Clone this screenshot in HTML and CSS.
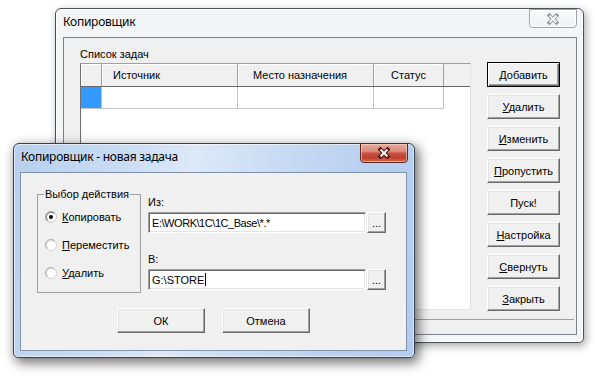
FILE: index.html
```html
<!DOCTYPE html>
<html lang="ru">
<head>
<meta charset="utf-8">
<title>Копировщик</title>
<link rel="stylesheet" href="styles.css">
</head>
<body>
<div class="desktop">
  <div class="win win-main">
    <div class="titlebar">
      <div class="title">Копировщик</div>
      <div class="close close-inactive">
        <svg width="14" height="12" viewBox="0 0 14 12">
          <path d="M3.5 2.5 L10.5 9.5 M10.5 2.5 L3.5 9.5" stroke="#8c9096" stroke-width="3.8" stroke-linecap="square" fill="none"/>
          <path d="M3.5 2.5 L10.5 9.5 M10.5 2.5 L3.5 9.5" stroke="#f7f7f7" stroke-width="1.9" stroke-linecap="butt" fill="none"/>
        </svg>
      </div>
    </div>
    <div class="client client-main">
      <div class="main-body">
        <div class="tasks">
          <div class="tasks-label">Список задач</div>
          <div class="grid">
            <div class="grid-head">
              <div class="hcell c0"></div>
              <div class="hcell c1 h-src">Источник</div>
              <div class="hcell c2 h-dst">Место назначения</div>
              <div class="hcell c3 h-status">Статус</div>
            </div>
            <div class="grid-row">
              <div class="cell c0 sel"></div>
              <div class="cell c1"></div>
              <div class="cell c2"></div>
              <div class="cell c3"></div>
            </div>
          </div>
        </div>
        <div class="side-buttons">
          <div class="btn btn-side btn-default"><span><u>Д</u>обавить</span></div>
          <div class="btn btn-side"><span><u>У</u>далить</span></div>
          <div class="btn btn-side"><span><u>И</u>зменить</span></div>
          <div class="btn btn-side"><span><u>П</u>ропустить</span></div>
          <div class="btn btn-side"><span>Пуск!</span></div>
          <div class="btn btn-side"><span><u>Н</u>астройка</span></div>
          <div class="btn btn-side"><span><u>С</u>вернуть</span></div>
          <div class="btn btn-side"><span><u>З</u>акрыть</span></div>
        </div>
      </div>
      <div class="statusbar"></div>
    </div>
  </div>

  <div class="win win-dialog">
    <div class="titlebar">
      <div class="title">Копировщик - новая задача</div>
      <div class="close close-active">
        <svg width="14" height="12" viewBox="0 0 14 12">
          <path d="M3.5 2.5 L10.5 9.5 M10.5 2.5 L3.5 9.5" stroke="#4a0f08" stroke-width="4" stroke-linecap="square" fill="none"/>
          <path d="M3.5 2.5 L10.5 9.5 M10.5 2.5 L3.5 9.5" stroke="#ffffff" stroke-width="2" stroke-linecap="butt" fill="none"/>
        </svg>
      </div>
    </div>
    <div class="client client-dialog">
      <div class="dlg-top">
        <fieldset class="group">
          <legend>Выбор действия</legend>
          <div class="radio">
            <svg class="radio-mark" width="12" height="12" viewBox="0 0 12 12">
              <circle cx="6" cy="6" r="5.5" fill="#fff" stroke="#c8c8c8"/>
              <path d="M2.1 9.9 A5.5 5.5 0 0 1 9.9 2.1" stroke="#a0a0a0" fill="none"/>
              <path d="M2.8 9.2 A4.5 4.5 0 0 1 9.2 2.8" stroke="#808080" fill="none"/>
              <circle cx="6" cy="6" r="2" fill="#000"/>
            </svg>
            <span><u>К</u>опировать</span>
          </div>
          <div class="radio">
            <svg class="radio-mark" width="12" height="12" viewBox="0 0 12 12">
              <circle cx="6" cy="6" r="5.5" fill="#fff" stroke="#d4d4d4"/>
              <path d="M2.1 9.9 A5.5 5.5 0 0 1 9.9 2.1" stroke="#b4b4b4" fill="none"/>
              <path d="M2.8 9.2 A4.5 4.5 0 0 1 9.2 2.8" stroke="#d0d0d0" fill="none"/>
            </svg>
            <span><u>П</u>ереместить</span>
          </div>
          <div class="radio">
            <svg class="radio-mark" width="12" height="12" viewBox="0 0 12 12">
              <circle cx="6" cy="6" r="5.5" fill="#fff" stroke="#d4d4d4"/>
              <path d="M2.1 9.9 A5.5 5.5 0 0 1 9.9 2.1" stroke="#b4b4b4" fill="none"/>
              <path d="M2.8 9.2 A4.5 4.5 0 0 1 9.2 2.8" stroke="#d0d0d0" fill="none"/>
            </svg>
            <span><u>У</u>далить</span>
          </div>
        </fieldset>
        <div class="fields">
          <div class="field-label">Из:</div>
          <div class="field-row">
            <div class="edit edit-src">E:\WORK\1C\1C_Base\*.*</div>
            <div class="btn btn-browse"><span>...</span></div>
          </div>
          <div class="field-label field-label-2">В:</div>
          <div class="field-row">
            <div class="edit">G:\STORE<span class="caret"></span></div>
            <div class="btn btn-browse"><span>...</span></div>
          </div>
        </div>
      </div>
      <div class="dlg-buttons">
        <div class="btn btn-dlg"><span>ОК</span></div>
        <div class="btn btn-dlg"><span>Отмена</span></div>
      </div>
    </div>
  </div>
</div>
</body>
</html>
```

FILE: styles.css
```css
* { box-sizing: border-box; }
html, body { margin: 0; padding: 0; }
body {
  width: 595px;
  height: 378px;
  overflow: hidden;
  background: #fff;
  font-family: "Liberation Sans", Arial, sans-serif;
  font-size: 11px;
  color: #000;
}
.desktop { position: relative; width: 595px; height: 378px; }

/* windows */
.win {
  position: absolute;
  display: flex;
  flex-direction: column;
  border: 1px solid #4e5257;
  border-radius: 6px 6px 5px 5px;
}
.win-main {
  left: 55px;
  top: 8px;
  width: 529px;
  height: 335px;
  padding: 0 6px 7px 7px;
  background: #f4f5f7;
  box-shadow: 2px 3px 8px rgba(0,0,0,.35), inset 0 0 0 1px #ffffff;
}
.win-dialog {
  left: 13px;
  top: 143px;
  width: 402px;
  height: 215px;
  padding: 0 7px 6px 6px;
  border-color: #34404e;
  background: linear-gradient(100deg, #b8d0ee 0%, #c6daf2 22%, #dce9f8 42%, #cadcf3 60%, #b9d1ef 80%, #b3ccee 100%);
  box-shadow: 3px 4px 12px 1px rgba(0,0,0,.55), inset 0 0 0 1px rgba(255,255,255,.55);
}

.titlebar {
  height: 28px;
  flex: none;
  display: flex;
  align-items: flex-start;
}
.title {
  flex: 1;
  margin-top: 5px;
  font-family: "Noto Sans", "Open Sans", sans-serif;
  font-size: 12px;
  line-height: 16px;
  letter-spacing: -0.25px;
  color: #000;
  white-space: nowrap;
}
.win-dialog .title { padding-left: 1px; }

.close {
  width: 48px;
  height: 19px;
  display: flex;
  align-items: center;
  justify-content: center;
  border-radius: 0 0 4px 4px;
}
.close-inactive {
  border: 1px solid #9ea3aa;
  background: linear-gradient(#f9fafb, #eef0f3);
  box-shadow: inset 0 0 0 1px #ffffff;
}
.close-active {
  margin-top: -1px;
  margin-right: -1px;
  height: 20px;
  border: 1px solid #5a2620;
  background: linear-gradient(#e8a99b 0%, #dc8d7c 40%, #c8513f 52%, #c1402f 75%, #d8694e 100%);
  box-shadow: inset 0 0 0 1px rgba(255,220,210,.55);
}

.client {
  flex: 1;
  display: flex;
  flex-direction: column;
  background: #f0f0f0;
}
.client-main { border: 1px solid #7d8288; }
.client-dialog { border: 1px solid #8294ab; padding-left: 16px; }

/* main window */
.main-body {
  height: 281px;
  flex: none;
  display: flex;
  padding: 9px 0 0 16px;
}
.tasks { width: 391px; display: flex; flex-direction: column; }
.tasks-label { height: 13px; line-height: 13px; margin-bottom: 3px; margin-top: 1px; }
.grid {
  width: 391px;
  height: 247px;
  margin-top: -1px;
  background: #fff;
  border: 1px solid;
  border-color: #a0a0a0 #e3e3e3 #e3e3e3 #6e6e6e;
}
.grid-head {
  display: flex;
  height: 23px;
  background: #f0f0f0;
  border-bottom: 1px solid #696969;
}
.hcell {
  height: 22px;
  line-height: 22px;
  border-right: 1px solid #a0a0a0;
  box-shadow: inset 1px 1px #ffffff;
  white-space: nowrap;
}
.c0 { width: 21px; }
.c1 { width: 136px; }
.c2 { width: 136px; }
.c3 { width: 70px; }
.h-src { padding-left: 11px; }
.h-dst { padding-left: 15px; }
.h-status { text-align: center; }
.grid-row { display: flex; height: 22px; }
.cell {
  height: 22px;
  border-right: 1px solid #c4c4c4;
  border-bottom: 1px solid #c4c4c4;
}
.cell.sel { background: #3399ff; }

.side-buttons {
  display: flex;
  flex-direction: column;
  gap: 7px;
  margin: 15px 0 0 16px;
}
.statusbar {
  flex: 1;
  border-top: 1px solid #a0a0a0;
  margin-right: 2px;
}

/* buttons */
.btn {
  display: flex;
  align-items: center;
  justify-content: center;
  background: #f0f0f0;
  border: 1px solid;
  border-color: #ffffff #696969 #696969 #ffffff;
  box-shadow: inset -1px -1px #a0a0a0, inset 1px 1px #e3e3e3;
  white-space: nowrap;
}
.btn-side { width: 73px; height: 25px; }
.btn-default {
  border-color: #000;
  box-shadow: inset 1px 1px #ffffff, inset -1px -1px #696969, inset -2px -2px #a0a0a0;
}
.btn-browse { width: 19px; height: 21px; align-items: flex-end; padding-bottom: 3px; line-height: 11px; }
.btn-dlg { width: 88px; height: 25px; }
u { text-decoration: underline; text-underline-offset: 1px; }

/* dialog */
.dlg-top { display: flex; align-items: flex-start; }
.group {
  margin: 15px 0 0 0;
  width: 104px;
  min-inline-size: 0;
  padding: 2px 0 5px 7px;
  border: 1px solid #a0a0a0;
}
.group legend {
  padding: 0 1px;
  margin-left: -1px;
  line-height: 13px;
  white-space: nowrap;
}
.radio {
  height: 28px;
  display: flex;
  align-items: center;
  gap: 5px;
  white-space: nowrap;
}
.radio-mark { flex: none; }
.fields {
  margin-left: 7px;
  padding-top: 23px;
  display: flex;
  flex-direction: column;
}
.field-label { height: 13px; line-height: 13px; margin-bottom: 3px; }
.field-label-2 { margin-top: 20px; }
.field-row { display: flex; gap: 1px; height: 21px; }
.edit {
  width: 218px;
  height: 21px;
  display: flex;
  align-items: center;
  padding-left: 3px;
  background: #fff;
  border: 1px solid;
  border-color: #a0a0a0 #ffffff #ffffff #a0a0a0;
  box-shadow: inset 1px 1px #696969, inset -1px -1px #e3e3e3;
  white-space: nowrap;
}
.edit-src { letter-spacing: -0.45px; }
.caret {
  display: inline-block;
  width: 1px;
  height: 13px;
  margin-left: 1px;
  background: #000;
}
.dlg-buttons {
  display: flex;
  gap: 17px;
  margin: 15px 0 0 80px;
}
```
